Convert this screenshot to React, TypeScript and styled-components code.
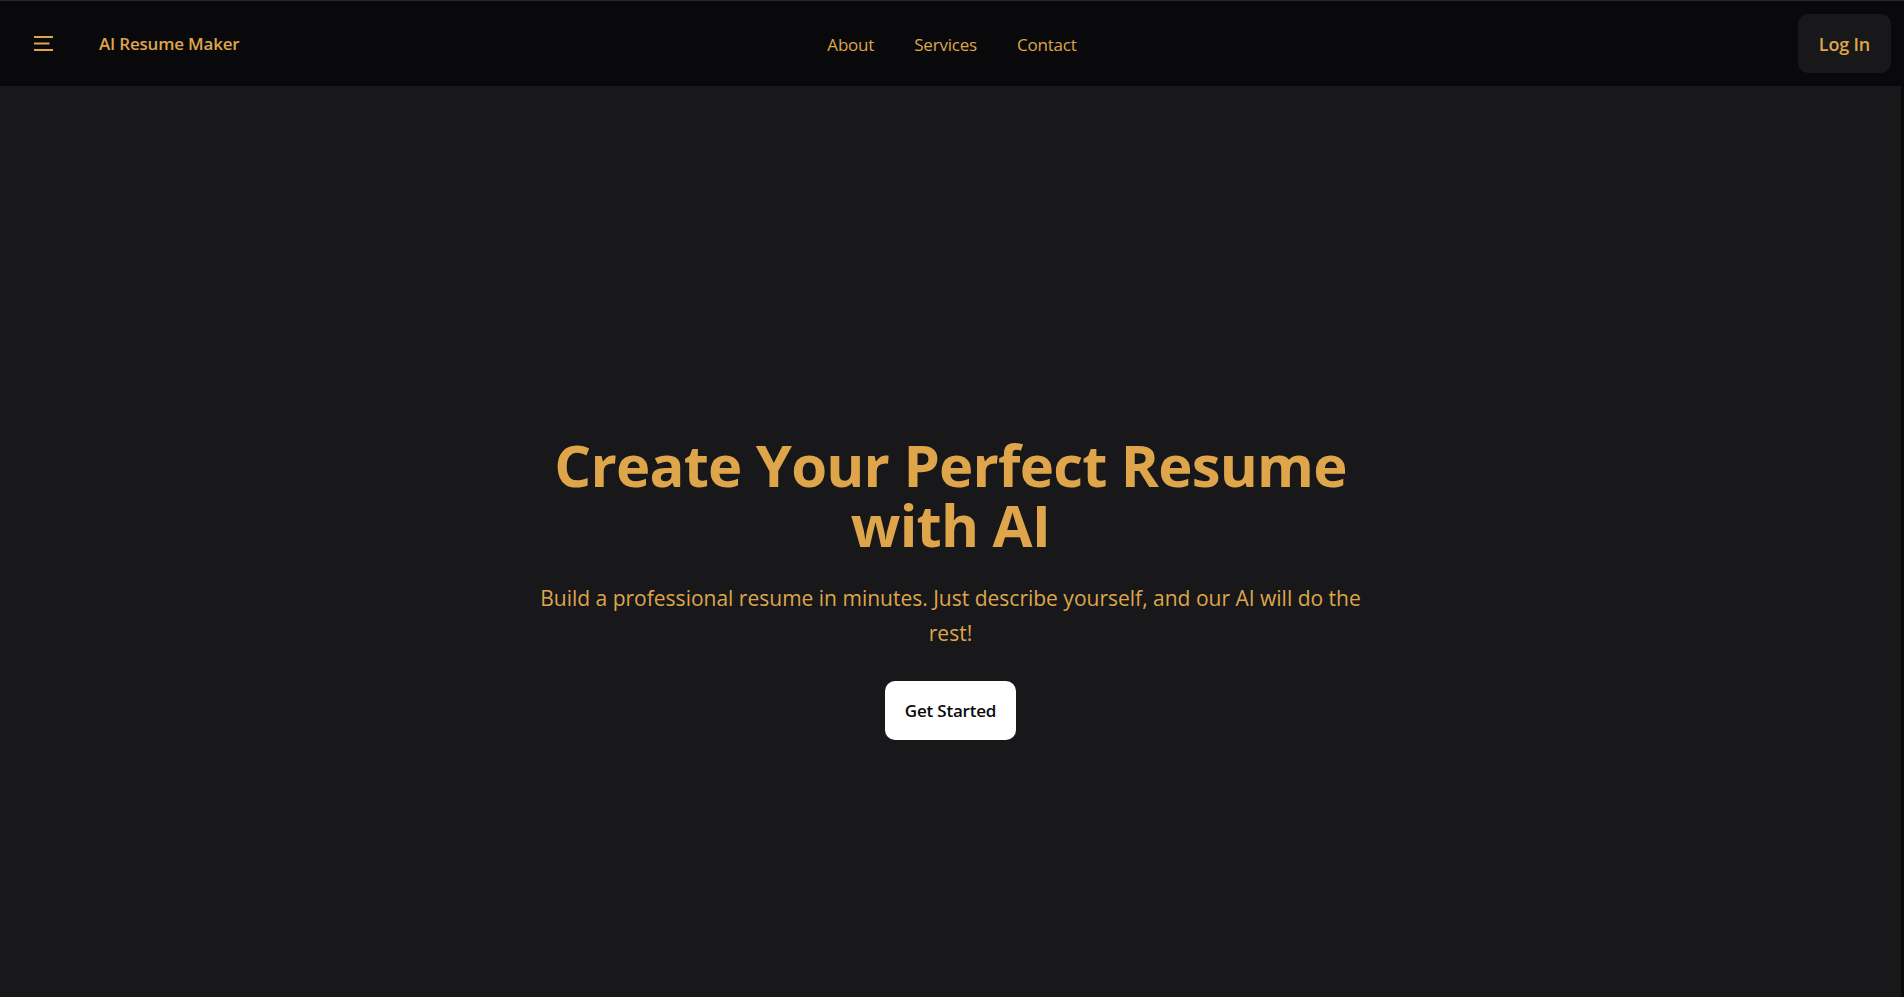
import React from "react";
import styled, { createGlobalStyle } from "styled-components";

const GlobalStyle = createGlobalStyle`
  *, *::before, *::after { box-sizing: border-box; }
  html, body { margin: 0; padding: 0; background: #18181b; }
  body { font-family: "Open Sans", "Noto Sans", sans-serif; -webkit-font-smoothing: antialiased; }
`;

const GOLD = "#dea54b";

const Page = styled.div`
  min-height: 100vh;
  display: flex;
  flex-direction: column;
  background: #18181b;
`;

const Header = styled.header`
  height: 86px;
  border-top: 1px solid #27272a;
  background: #09090b;
  display: grid;
  grid-template-columns: 1fr auto 1fr;
  align-items: center;
  padding: 0 13px;
`;

const Left = styled.div`
  display: flex;
  align-items: center;
`;

const MenuButton = styled.button`
  display: flex;
  align-items: center;
  justify-content: center;
  margin-left: 13px;
  padding: 8px;
  background: transparent;
  border: 0;
  color: ${GOLD};
  cursor: pointer;
`;

const Brand = styled.a`
  margin-left: 38px;
  font-size: 17px;
  font-weight: 600;
  letter-spacing: -0.2px;
  color: ${GOLD};
  text-decoration: none;
`;

const Nav = styled.nav`
  display: flex;
  align-items: center;
  gap: 40px;
  padding-top: 1px;
`;

const NavLink = styled.a`
  font-size: 17px;
  font-weight: 400;
  letter-spacing: -0.2px;
  color: ${GOLD};
  text-decoration: none;
`;

const Right = styled.div`
  display: flex;
  justify-content: flex-end;
`;

const LoginButton = styled.button`
  height: 59px;
  padding: 0 21px;
  border: 0;
  border-radius: 10px;
  background: #18181b;
  color: ${GOLD};
  font-family: inherit;
  font-size: 18px;
  font-weight: 600;
  letter-spacing: -0.2px;
  cursor: pointer;
`;

const Main = styled.main`
  flex: 1;
  display: flex;
  flex-direction: column;
  align-items: center;
  justify-content: center;
  padding: 92px 0 0;
  border-right: 3px solid #0a0a0b;
`;

const Title = styled.h1`
  margin: 0;
  max-width: 900px;
  font-size: 58px;
  line-height: 60px;
  font-weight: 700;
  letter-spacing: -0.8px;
  color: ${GOLD};
  text-align: center;
`;

const Subtitle = styled.p`
  margin: 26px 0 0;
  max-width: 860px;
  font-size: 21px;
  line-height: 35px;
  color: ${GOLD};
  text-align: center;
`;

const CTA = styled.button`
  margin-top: 30px;
  height: 59px;
  padding: 0 20px;
  border: 0;
  border-radius: 10px;
  background: #ffffff;
  color: #0a0a0a;
  font-family: inherit;
  font-size: 17px;
  font-weight: 600;
  letter-spacing: -0.2px;
  cursor: pointer;
`;

const MenuIcon = () => (
  <svg width="19" height="15" viewBox="0 0 19 15" fill="none" stroke="currentColor" strokeWidth="2" strokeLinecap="butt">
    <line x1="0" y1="1" x2="19" y2="1" />
    <line x1="0" y1="7.5" x2="15.5" y2="7.5" />
    <line x1="0" y1="14" x2="19" y2="14" />
  </svg>
);

export default function App() {
  return (
    <>
      <GlobalStyle />
      <Page>
        <Header>
          <Left>
            <MenuButton aria-label="Menu">
              <MenuIcon />
            </MenuButton>
            <Brand href="#">AI Resume Maker</Brand>
          </Left>
          <Nav>
            <NavLink href="#">About</NavLink>
            <NavLink href="#">Services</NavLink>
            <NavLink href="#">Contact</NavLink>
          </Nav>
          <Right>
            <LoginButton>Log In</LoginButton>
          </Right>
        </Header>
        <Main>
          <Title>Create Your Perfect Resume with AI</Title>
          <Subtitle>
            Build a professional resume in minutes. Just describe yourself, and our AI will do the rest!
          </Subtitle>
          <CTA>Get Started</CTA>
        </Main>
      </Page>
    </>
  );
}
